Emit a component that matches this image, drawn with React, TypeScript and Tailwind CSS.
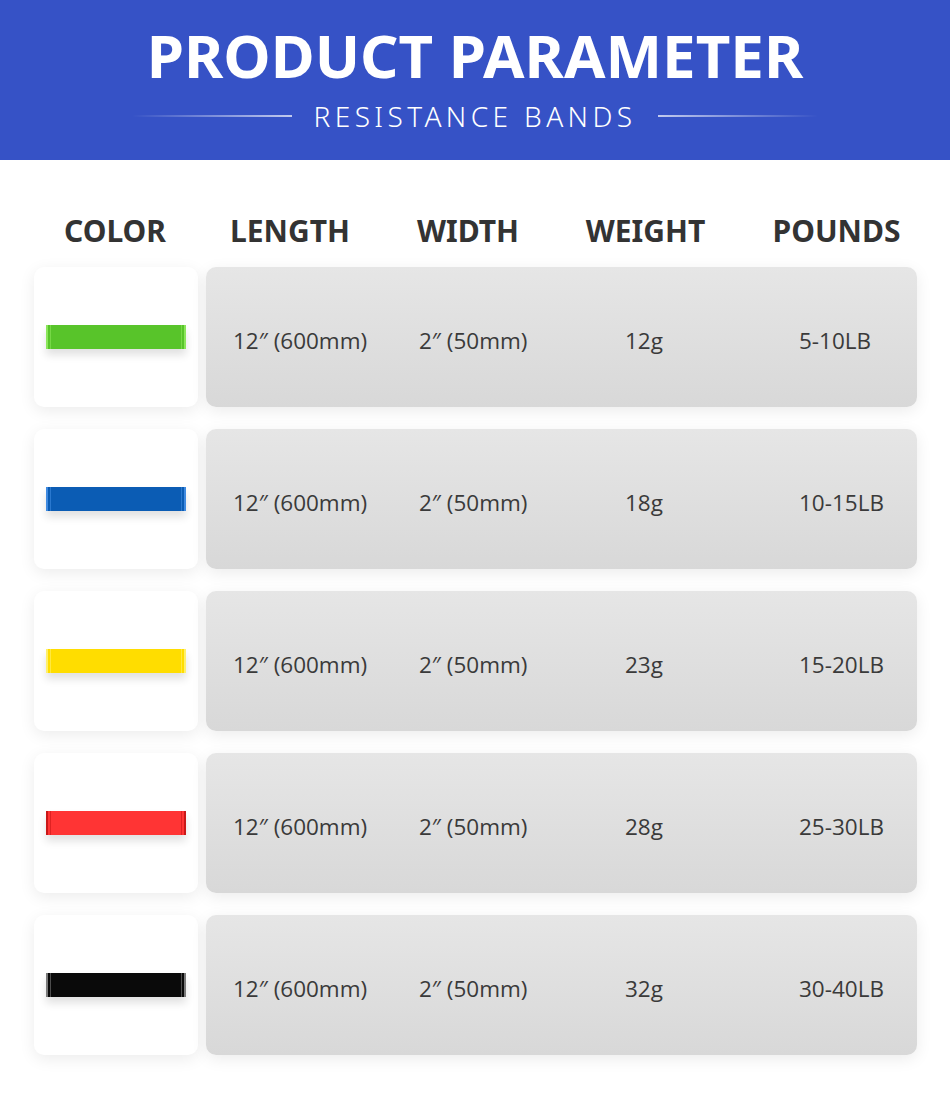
const HEADS = [
  { label: 'COLOR', w: 'w-[190px]' },
  { label: 'LENGTH', w: 'w-[160px]' },
  { label: 'WIDTH', w: 'w-[196px]' },
  { label: 'WEIGHT', w: 'w-[159px]' },
  { label: 'POUNDS', w: 'w-[223px]' }
]

const ROWS = [
  { band: 'bg-[#58c42a]', edge: 'bg-[#8be65a]', weight: '12g', pounds: '5-10LB' },
  { band: 'bg-[#0b5cb4]', edge: 'bg-[#3f8ae0]', weight: '18g', pounds: '10-15LB' },
  { band: 'bg-[#ffdd00]', edge: 'bg-[#fff06a]', weight: '23g', pounds: '15-20LB' },
  { band: 'bg-[#ff3434]', edge: 'bg-[#c91818]', weight: '28g', pounds: '25-30LB' },
  { band: 'bg-[#0a0a0a]', edge: 'bg-[#7a7a7a]', weight: '32g', pounds: '30-40LB' }
]

function Band({ band, edge }: { band: string; edge: string }): JSX.Element {
  return (
    <div className={`flex h-[24px] w-[140px] shadow-[0_6px_8px_rgba(0,0,0,0.12)] ${band}`}>
      <span className={`w-[2px] ${edge}`} />
      <span className="w-[2px]" />
      <span className={`w-[1px] ${edge} opacity-60`} />
      <span className="flex-1" />
      <span className={`w-[1px] ${edge} opacity-60`} />
      <span className="w-[2px]" />
      <span className={`w-[2px] ${edge}`} />
    </div>
  )
}

export default function App(): JSX.Element {
  return (
    <div className="h-[1115px] w-[950px] overflow-hidden bg-white font-['Noto_Sans',sans-serif] text-[#333]">
      <header className="flex h-[160px] flex-col items-center bg-[#3652c6] pt-[20px] text-white">
        <h1 className="text-[60px] leading-[70px] font-bold">PRODUCT PARAMETER</h1>
        <div className="mt-[10px] flex items-center gap-[22px]">
          <span className="h-[2px] w-[160px] bg-linear-to-r from-transparent to-white/70" />
          <span className="text-[28px] leading-[32px] font-light tracking-[4.4px]">RESISTANCE BANDS</span>
          <span className="h-[2px] w-[160px] bg-linear-to-l from-transparent to-white/70" />
        </div>
      </header>

      <div className="flex pt-[51px] pl-[20px]">
        {HEADS.map((h) => (
          <span key={h.label} className={`flex-none text-center text-[30px] leading-[40px] font-bold ${h.w}`}>
            {h.label}
          </span>
        ))}
      </div>

      <div className="mt-[16px] flex flex-col gap-[22px] pl-[34px] font-['Open_Sans',sans-serif] text-[22.5px] text-[#3a3a3a]">
        {ROWS.map((r) => (
          <div key={r.pounds} className="flex h-[140px] gap-[8px]">
            <div className="flex w-[164px] items-center justify-center rounded-[10px] bg-white shadow-[0_4px_16px_rgba(0,0,0,0.08)]">
              <Band band={r.band} edge={r.edge} />
            </div>
            <div className="flex w-[711px] items-center rounded-[10px] bg-linear-to-b from-[#e6e6e6] to-[#d8d8d8] pt-[8px] shadow-[0_4px_16px_rgba(0,0,0,0.08)]">
              <span className="w-[213px] pl-[27px]">12″ (600mm)</span>
              <span className="w-[206px]">2″ (50mm)</span>
              <span className="w-[174px]">{r.weight}</span>
              <span>{r.pounds}</span>
            </div>
          </div>
        ))}
      </div>
    </div>
  )
}
